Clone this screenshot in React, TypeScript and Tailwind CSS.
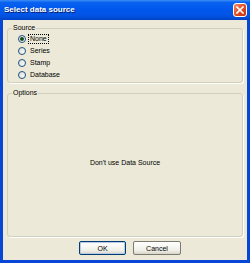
import React, { useState } from "react";

const sources = ["None", "Series", "Stamp", "Database"];

const Radio = ({ checked }: { checked: boolean }) => (
  <span className="w-[8px] h-[8px] rounded-full border border-[#1c5180] bg-[linear-gradient(135deg,#dcdcd6,#ffffff)] flex items-center justify-center shrink-0">
    {checked && <span className="w-[4px] h-[4px] rounded-full bg-[#1a4a1a]" />}
  </span>
);

const App = () => {
  const [selected, setSelected] = useState("None");

  return (
    <div
      className="w-[250px] h-[263px] flex flex-col bg-[#0846d8] text-black"
      style={{ fontFamily: '"Liberation Sans", Arial, sans-serif' }}
    >
      {/* title bar */}
      <div className="h-[20px] shrink-0 flex items-center justify-between pl-[4px] pr-[3px] bg-[linear-gradient(180deg,#3d8ef7_0%,#0a62ef_12%,#0058ee_45%,#0253e3_80%,#0043c4_100%)]">
        <span className="text-white font-bold text-[8px] leading-[10px] [text-shadow:1px_1px_0_#0a1e6a]">
          Select data source
        </span>
        <button className="w-[14px] h-[14px] rounded-[3px] border border-white bg-[linear-gradient(135deg,#f08a6a,#e04a1e_55%,#c2340f)] flex items-center justify-center">
          <svg width="8" height="8" viewBox="0 0 8 8">
            <path d="M1 1L7 7M7 1L1 7" stroke="#fff" strokeWidth="1.6" strokeLinecap="square" />
          </svg>
        </button>
      </div>

      {/* body */}
      <div className="mx-[3px] mb-[3px] flex-1 bg-[#ece9d8] flex flex-col pt-[4px] px-[4px] text-[7px]">
        <fieldset className="h-[59px] border border-[#d0d0bf] rounded-[3px] shadow-[1px_1px_0_#fff] px-0 pt-[1px] pb-0">
          <legend className="ml-[4px] px-[1px] leading-[8px]">Source</legend>
          <div className="flex flex-col">
            {sources.map((s) => (
              <div
                key={s}
                onClick={() => setSelected(s)}
                className="h-[12px] flex items-center pl-[10px] gap-[3px] cursor-default"
              >
                <Radio checked={selected === s} />
                <span
                  className={`leading-[8px] px-[1px] ${
                    selected === s ? "outline-1 outline-dotted outline-black" : ""
                  }`}
                >
                  {s}
                </span>
              </div>
            ))}
          </div>
        </fieldset>

        <fieldset className="mt-[6px] h-[148px] border border-[#d0d0bf] rounded-[3px] shadow-[1px_1px_0_#fff] p-0">
          <legend className="ml-[4px] px-[1px] leading-[8px]">Options</legend>
          <div className="h-[133px] flex items-center justify-center">
            Don't use Data Source
          </div>
        </fieldset>

        <div className="mt-[4px] flex justify-center gap-[7px] pl-[10px]">
          <button className="w-[47px] h-[14px] rounded-[2px] border border-[#003c74] shadow-[inset_0_0_0_1px_#b9c9e6] bg-[linear-gradient(180deg,#ffffff,#f0f0ea_70%,#d8d4c6)] text-[7px] leading-none">
            OK
          </button>
          <button className="w-[48px] h-[14px] rounded-[2px] border border-[#7a7a72] bg-[linear-gradient(180deg,#ffffff,#f0f0ea_70%,#d8d4c6)] text-[7px] leading-none">
            Cancel
          </button>
        </div>
      </div>
    </div>
  );
};

export default App;
